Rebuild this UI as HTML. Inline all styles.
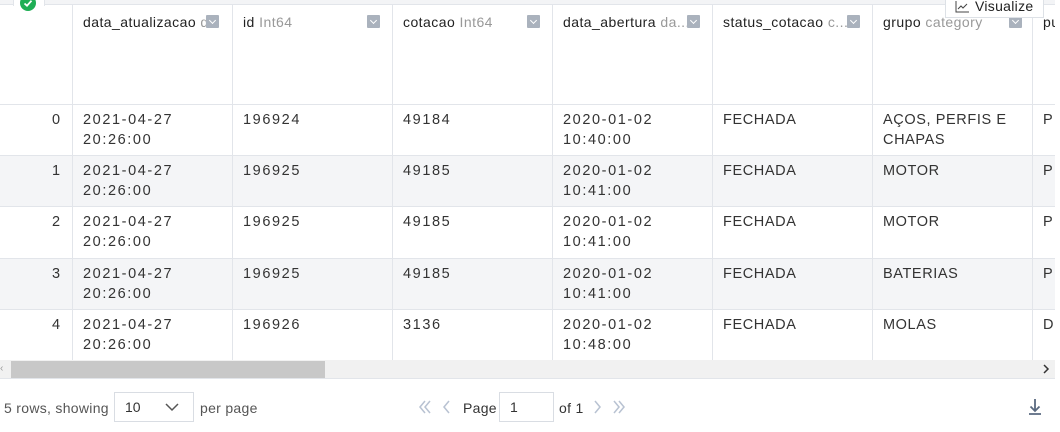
<!DOCTYPE html>
<html><head><meta charset="utf-8"><style>
*{margin:0;padding:0;box-sizing:border-box}
body{width:1060px;height:432px;overflow:hidden;background:#fff;font-family:"Liberation Sans",sans-serif;color:#333;position:relative;font-size:14px}
.topbar{position:absolute;left:0;top:0;width:1060px;height:5px;background:#f3f4f6;border-bottom:1px solid #e2e5ea}
.tab{position:absolute;left:13px;top:0;width:32px;height:6px;background:#fff;border-left:1px solid #e2e5ea;border-right:1px solid #e2e5ea}
.check{position:absolute;left:20px;top:-5px;width:16px;height:16px;border-radius:50%;background:#1fae55}
.vis{position:absolute;left:945px;top:-2px;width:99px;height:20px;background:#fff;border:1px solid #dde1e6;border-top:none;font-size:14px;line-height:16px;padding-left:29px;color:#222;letter-spacing:0.3px}
.vis svg{position:absolute;left:9px;top:3px}
.vl{position:absolute;top:5px;width:1px;height:355px;background:#e2e5ea}
.hl{position:absolute;left:0;width:1060px;height:1px;background:#e2e5ea}
.row{position:absolute;left:0;width:1060px;background:#f4f5f7}
.h{position:absolute;top:14px;font-size:14px;color:#222;white-space:nowrap;letter-spacing:0.45px}
.h span{color:#999}
.dd{position:absolute;top:15px;width:13px;height:13px;background:#aab2bd;border-radius:1px}
.dd:after{content:"";position:absolute;left:4px;top:3px;width:4px;height:4px;border-right:1.3px solid #fff;border-bottom:1.3px solid #fff;transform:rotate(45deg)}
.c{position:absolute;font-size:14.5px;line-height:20px;color:#333;white-space:nowrap;letter-spacing:1.6px}
.t{letter-spacing:0.6px}
.sb{position:absolute;left:0;top:360px;width:1055px;height:18px;background:#f1f1f1}
.thumb{position:absolute;left:11px;top:361px;width:314px;height:17px;background:#c8c8c8}
.f{position:absolute;font-size:14px;color:#555;letter-spacing:0.3px}
.clip{position:absolute;left:1055px;top:0;width:5px;height:378px;background:#fff}
</style></head><body>
<div class="topbar"></div><div class="tab"></div><div class="check"><svg width="16" height="16"><path d="M4.5 8.5l2.5 2.2 4.5-5" stroke="#fff" stroke-width="1.8" fill="none"/></svg></div>
<div class="row" style="top:155px;height:51px"></div>
<div class="row" style="top:258px;height:51px"></div>
<div class="hl" style="top:104px"></div><div class="hl" style="top:155px"></div><div class="hl" style="top:206px"></div><div class="hl" style="top:258px"></div><div class="hl" style="top:309px"></div>
<div class="vl" style="left:72px"></div><div class="vl" style="left:232px"></div><div class="vl" style="left:392px"></div><div class="vl" style="left:552px"></div><div class="vl" style="left:712px"></div><div class="vl" style="left:872px"></div><div class="vl" style="left:1032px"></div>
<div class="h" style="left:83px">data_atualizacao <span>d</span></div><div class="dd" style="left:206px"></div>
<div class="h" style="left:243px">id <span>Int64</span></div><div class="dd" style="left:367px"></div>
<div class="h" style="left:403px">cotacao <span>Int64</span></div><div class="dd" style="left:527px"></div>
<div class="h" style="left:563px">data_abertura <span>da...</span></div><div class="dd" style="left:687px"></div>
<div class="h" style="left:723px">status_cotacao <span>c...</span></div><div class="dd" style="left:847px"></div>
<div class="h" style="left:883px">grupo <span>category</span></div><div class="dd" style="left:1009px"></div>
<div class="h" style="left:1043px">pu</div>

<div class="c" style="left:52px;top:110px">0</div><div class="c" style="left:83px;top:110px">2021-04-27<br>20:26:00</div><div class="c" style="left:243px;top:110px">196924</div><div class="c" style="left:403px;top:110px">49184</div><div class="c" style="left:563px;top:110px">2020-01-02<br>10:40:00</div><div class="c t" style="left:723px;top:110px">FECHADA</div><div class="c t" style="left:883px;top:110px">AÇOS, PERFIS E<br>CHAPAS</div><div class="c" style="left:1043px;top:110px">P</div>
<div class="c" style="left:52px;top:161px">1</div><div class="c" style="left:83px;top:161px">2021-04-27<br>20:26:00</div><div class="c" style="left:243px;top:161px">196925</div><div class="c" style="left:403px;top:161px">49185</div><div class="c" style="left:563px;top:161px">2020-01-02<br>10:41:00</div><div class="c t" style="left:723px;top:161px">FECHADA</div><div class="c t" style="left:883px;top:161px">MOTOR</div><div class="c" style="left:1043px;top:161px">P</div>
<div class="c" style="left:52px;top:212px">2</div><div class="c" style="left:83px;top:212px">2021-04-27<br>20:26:00</div><div class="c" style="left:243px;top:212px">196925</div><div class="c" style="left:403px;top:212px">49185</div><div class="c" style="left:563px;top:212px">2020-01-02<br>10:41:00</div><div class="c t" style="left:723px;top:212px">FECHADA</div><div class="c t" style="left:883px;top:212px">MOTOR</div><div class="c" style="left:1043px;top:212px">P</div>
<div class="c" style="left:52px;top:264px">3</div><div class="c" style="left:83px;top:264px">2021-04-27<br>20:26:00</div><div class="c" style="left:243px;top:264px">196925</div><div class="c" style="left:403px;top:264px">49185</div><div class="c" style="left:563px;top:264px">2020-01-02<br>10:41:00</div><div class="c t" style="left:723px;top:264px">FECHADA</div><div class="c t" style="left:883px;top:264px">BATERIAS</div><div class="c" style="left:1043px;top:264px">P</div>
<div class="c" style="left:52px;top:315px">4</div><div class="c" style="left:83px;top:315px">2021-04-27<br>20:26:00</div><div class="c" style="left:243px;top:315px">196926</div><div class="c" style="left:403px;top:315px">3136</div><div class="c" style="left:563px;top:315px">2020-01-02<br>10:48:00</div><div class="c t" style="left:723px;top:315px">FECHADA</div><div class="c t" style="left:883px;top:315px">MOLAS</div><div class="c" style="left:1043px;top:315px">D</div>
<div class="clip"></div>
<div class="vis"><svg width="14" height="12"><path d="M1 0v11h13" stroke="#444" fill="none"/><path d="M3 8l3-3 2 2 4-4" stroke="#444" fill="none"/></svg>Visualize</div>

<div class="sb"></div><div class="thumb"></div>
<div class="f" style="left:0;top:363px;font-size:10px;color:#999">‹</div>
<svg style="position:absolute;left:1042px;top:364px" width="8" height="10"><path d="M2 1l4 4-4 4" stroke="#333" stroke-width="1.5" fill="none"/></svg>
<div class="hl" style="top:378px;width:1055px"></div>

<div class="f" style="left:4px;top:400px">5 rows, showing</div>
<div style="position:absolute;left:114px;top:392px;width:80px;height:30px;border:1px solid #d9dde3;font-size:14px;line-height:28px;padding-left:10px;color:#333">10<svg style="position:absolute;left:50px;top:10px" width="14" height="9"><path d="M1 1l6 6 6-6" stroke="#555" stroke-width="1.5" fill="none"/></svg></div>
<div class="f" style="left:200px;top:400px">per page</div>
<svg style="position:absolute;left:418px;top:400px" width="40" height="14"><path d="M7 1l-5 6 5 6M12 1l-5 6 5 6M31 1l-5 6 5 6" stroke="#b8c2d2" stroke-width="1.5" fill="none"/></svg>
<div class="f" style="left:463px;top:400px;color:#333">Page</div>
<div style="position:absolute;left:499px;top:392px;width:55px;height:30px;border:1px solid #d9dde3;font-size:14px;line-height:28px;padding-left:10px;color:#333">1</div>
<div class="f" style="left:559px;top:400px;color:#333">of 1</div>
<svg style="position:absolute;left:592px;top:400px" width="40" height="14"><path d="M3 1l5 6-5 6M22 1l5 6-5 6M27 1l5 6-5 6" stroke="#b8c2d2" stroke-width="1.5" fill="none"/></svg>
<svg style="position:absolute;left:1027px;top:398px" width="16" height="18"><path d="M8 1v12M3.5 8.5l4.5 4.5 4.5-4.5M2 16h12" stroke="#5a6a80" stroke-width="1.8" fill="none"/></svg>
</body></html>
